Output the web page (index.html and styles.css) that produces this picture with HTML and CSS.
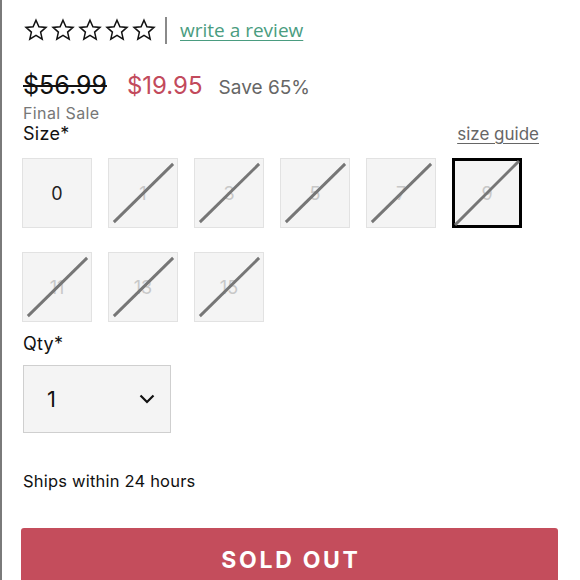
FILE: index.html
```html
<!DOCTYPE html>
<html>
<head>
<meta charset="utf-8">
<link rel="stylesheet" href="styles.css">
</head>
<body>
<div class="page">
  <div class="rating">
    <div class="stars">
      <svg class="star" viewBox="0 0 24 24"><path d="M12 2.2l2.9 6.6 7.1.6-5.4 4.7 1.6 7-6.2-3.7-6.2 3.7 1.6-7L2 9.4l7.1-.6z"/></svg>
      <svg class="star" viewBox="0 0 24 24"><path d="M12 2.2l2.9 6.6 7.1.6-5.4 4.7 1.6 7-6.2-3.7-6.2 3.7 1.6-7L2 9.4l7.1-.6z"/></svg>
      <svg class="star" viewBox="0 0 24 24"><path d="M12 2.2l2.9 6.6 7.1.6-5.4 4.7 1.6 7-6.2-3.7-6.2 3.7 1.6-7L2 9.4l7.1-.6z"/></svg>
      <svg class="star" viewBox="0 0 24 24"><path d="M12 2.2l2.9 6.6 7.1.6-5.4 4.7 1.6 7-6.2-3.7-6.2 3.7 1.6-7L2 9.4l7.1-.6z"/></svg>
      <svg class="star" viewBox="0 0 24 24"><path d="M12 2.2l2.9 6.6 7.1.6-5.4 4.7 1.6 7-6.2-3.7-6.2 3.7 1.6-7L2 9.4l7.1-.6z"/></svg>
    </div>
    <span class="sep"></span>
    <a class="review" href="#">write a review</a>
  </div>

  <div class="prices">
    <span class="old">$56.99</span>
    <span class="now">$19.95</span>
    <span class="save">Save 65%</span>
  </div>
  <div class="final">Final Sale</div>

  <div class="size-head">
    <span class="label">Size*</span>
    <a class="guide" href="#">size guide</a>
  </div>

  <div class="sizes">
    <div class="size"><span>0</span></div>
    <div class="size off"><span>1</span><svg class="slash" viewBox="0 0 70 70"><line x1="5" y1="65" x2="66" y2="5"/></svg></div>
    <div class="size off"><span>3</span><svg class="slash" viewBox="0 0 70 70"><line x1="5" y1="65" x2="66" y2="5"/></svg></div>
    <div class="size off"><span>5</span><svg class="slash" viewBox="0 0 70 70"><line x1="5" y1="65" x2="66" y2="5"/></svg></div>
    <div class="size off"><span>7</span><svg class="slash" viewBox="0 0 70 70"><line x1="5" y1="65" x2="66" y2="5"/></svg></div>
    <div class="size off sel"><span>9</span><svg class="slash" viewBox="0 0 70 70"><line x1="3" y1="67" x2="67" y2="3"/></svg></div>
    <div class="size off"><span>11</span><svg class="slash" viewBox="0 0 70 70"><line x1="5" y1="65" x2="66" y2="5"/></svg></div>
    <div class="size off"><span>13</span><svg class="slash" viewBox="0 0 70 70"><line x1="5" y1="65" x2="66" y2="5"/></svg></div>
    <div class="size off"><span>15</span><svg class="slash" viewBox="0 0 70 70"><line x1="5" y1="65" x2="66" y2="5"/></svg></div>
  </div>

  <div class="label qty-label">Qty*</div>
  <div class="qty">
    <span>1</span>
    <svg class="chev" viewBox="0 0 16 10"><path d="M1.5 1.5l6.5 6.5 6.5-6.5"/></svg>
  </div>

  <div class="ships">Ships within 24 hours</div>

  <button class="sold">SOLD OUT</button>
</div>
</body>
</html>
```

FILE: styles.css
```css
html, body {
  margin: 0;
  padding: 0;
  background: #fff;
}
body {
  font-family: "Inter", "Liberation Sans", sans-serif;
  color: #111;
  height: 580px;
  overflow: hidden;
}
.page {
  border-left: 2px solid #7a7a7a;
  min-height: 580px;
  padding-left: 21px;
  padding-right: 22px;
  box-sizing: border-box;
}
.rating {
  display: flex;
  align-items: center;
  padding-top: 16px;
  height: 28px;
}
.stars {
  display: flex;
  gap: 3px;
  margin-left: 1px;
}
.star {
  width: 24px;
  height: 24px;
}
.star path {
  fill: none;
  stroke: #111;
  stroke-width: 1.5;
  stroke-linejoin: miter;
}
.sep {
  width: 2px;
  height: 27px;
  background: #8a8a8a;
  margin: 0 13px 0 9px;
}
.review {
  font-family: "Open Sans", sans-serif;
  font-size: 19px;
  color: #4a9c80;
  text-decoration: underline;
  text-underline-offset: 3px;
}
.prices {
  display: flex;
  align-items: baseline;
  margin-top: 26px;
}
.old {
  font-size: 25px;
  color: #111;
  text-decoration: line-through;
  text-decoration-thickness: 2px;
  margin-right: 20px;
}
.now {
  font-size: 24px;
  color: #c24a5c;
  margin-right: 16px;
}
.save {
  font-size: 19px;
  color: #666;
}
.final {
  font-size: 16px;
  line-height: 20px;
  letter-spacing: 0.4px;
  color: #777;
  margin-top: 3px;
}
.size-head {
  display: flex;
  justify-content: space-between;
  align-items: baseline;
  line-height: 22px;
}
.label {
  font-size: 18px;
  line-height: 22px;
  letter-spacing: 0.3px;
  color: #111;
}
.guide {
  font-size: 17px;
  color: #666;
  text-decoration: underline;
  text-underline-offset: 3px;
  margin-right: 19px;
}
.sizes {
  display: grid;
  grid-template-columns: repeat(6, 70px);
  column-gap: 16px;
  row-gap: 24px;
  margin-top: 13px;
  margin-left: -1px;
}
.size {
  position: relative;
  width: 70px;
  height: 70px;
  box-sizing: border-box;
  border: 1px solid #e2e2e2;
  background: #f4f4f4;
  display: flex;
  align-items: center;
  justify-content: center;
  font-size: 18px;
  color: #222;
}
.size.off span {
  color: #c8c8c8;
}
.size.sel {
  border: 3px solid #000;
}
.slash {
  position: absolute;
  inset: 0;
  width: 100%;
  height: 100%;
}
.size.sel .slash {
  inset: -3px;
  width: 70px;
  height: 70px;
}
.slash line {
  stroke: #767676;
  stroke-width: 3;
}
.qty-label {
  margin-top: 11px;
}
.qty {
  margin-top: 10px;
  width: 148px;
  height: 68px;
  box-sizing: border-box;
  border: 1px solid #cfcfcf;
  background: #f4f4f4;
  display: flex;
  align-items: center;
  justify-content: space-between;
  padding: 0 15px 0 23px;
  font-size: 22px;
  color: #111;
}
.chev {
  width: 16px;
  height: 10px;
}
.chev path {
  fill: none;
  stroke: #111;
  stroke-width: 2.2;
}
.ships {
  font-size: 16.5px;
  line-height: 20px;
  letter-spacing: 0.2px;
  margin-top: 38px;
  color: #111;
}
.sold {
  display: block;
  margin-top: 37px;
  margin-left: -2px;
  width: 537px;
  height: 64px;
  line-height: 64px;
  border: none;
  border-radius: 3px;
  background: #c44d5c;
  color: #fff;
  font-family: "Inter", sans-serif;
  font-weight: 700;
  font-size: 23px;
  letter-spacing: 2.7px;
  padding: 0 0 0 3px;
  text-align: center;
}
```
